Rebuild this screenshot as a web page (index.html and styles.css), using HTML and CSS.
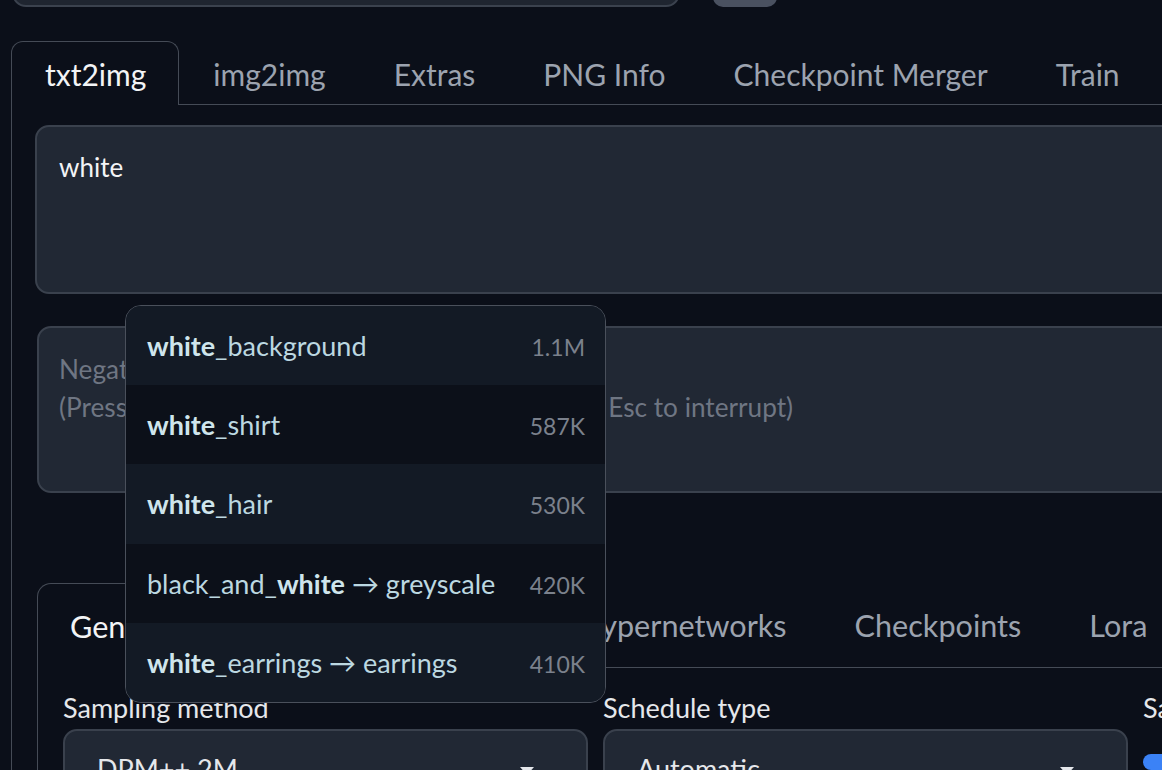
FILE: index.html
```html
<!DOCTYPE html>
<html>
<head>
<meta charset="utf-8">
<link rel="stylesheet" href="styles.css">
</head>
<body>
<div class="app">
  <div class="topbar">
    <div class="top-input"></div>
    <div class="top-btn"></div>
  </div>

  <div class="tabs">
    <div class="tabnav">
      <div class="tab active">txt2img</div>
      <div class="tab">img2img</div>
      <div class="tab">Extras</div>
      <div class="tab">PNG Info</div>
      <div class="tab">Checkpoint Merger</div>
      <div class="tab">Train</div>
      <div class="tab">Settings</div>
      <div class="tab">Extensions</div>
    </div>
    <div class="tabpanel">
      <div class="prompt">white</div>
      <div class="neg"><span class="ph">Negative prompt<br>(Press Ctrl+Enter to generate, Alt+Enter to skip, Esc to interrupt)</span></div>

      <div class="subtabs">
        <div class="subnav">
          <div class="stab active">Generation</div>
          <div class="stab">Textual Inversion</div>
          <div class="stab">Hypernetworks</div>
          <div class="stab">Checkpoints</div>
          <div class="stab">Lora</div>
        </div>
        <div class="subpanel">
          <div class="field">
            <div class="label">Sampling method</div>
            <div class="dropdown"><span>DPM++ 2M</span><i class="caret"></i></div>
          </div>
          <div class="field">
            <div class="label">Schedule type</div>
            <div class="dropdown"><span>Automatic</span><i class="caret"></i></div>
          </div>
          <div class="field">
            <div class="label">Sampling steps</div>
            <div class="slider"></div>
          </div>
        </div>
      </div>
    </div>
  </div>

  <div class="popup">
    <div class="row"><span class="name"><b>white</b>_background</span><span class="count">1.1M</span></div>
    <div class="row alt"><span class="name"><b>white</b>_shirt</span><span class="count">587K</span></div>
    <div class="row"><span class="name"><b>white</b>_hair</span><span class="count">530K</span></div>
    <div class="row alt"><span class="name">black_and_<b>white</b> → greyscale</span><span class="count">420K</span></div>
    <div class="row"><span class="name"><b>white</b>_earrings → earrings</span><span class="count">410K</span></div>
  </div>
</div>
</body>
</html>
```
FILE: styles.css
```css
html, body {
  margin: 0;
  padding: 0;
}
body {
  background: #0b0f19;
  font-family: Lato, "Noto Sans", sans-serif;
  width: 1162px;
  height: 770px;
  overflow: hidden;
}
.app {
  position: relative;
  display: flow-root;
  width: 1600px;
  height: 770px;
}

/* top bar (cut off) */
.topbar {
  display: flex;
  align-items: flex-end;
  height: 47px;
  margin-top: -40px;
}
.top-input {
  margin-left: 12px;
  width: 668px;
  height: 47px;
  box-sizing: border-box;
  background: #1f2530;
  border: 2px solid #3b424e;
  border-radius: 0 0 14px 14px;
}
.top-btn {
  margin-left: 33px;
  width: 64px;
  height: 47px;
  background: #4a5160;
  border-radius: 0 0 10px 10px;
}

/* main tabs */
.tabs {
  margin-top: 34px;
  margin-left: 11px;
}
.tabnav {
  display: flex;
  border-bottom: 1px solid #454b56;
  height: 63px;
}
.tab {
  padding: 0 34px;
  height: 63px;
  line-height: 66px;
  font-size: 30px;
  color: #9ca3af;
  white-space: nowrap;
}
.tab.active {
  color: #f3f4f6;
  border: 1px solid #454b56;
  border-bottom: none;
  border-radius: 12px 12px 0 0;
  background: #0b0f19;
  padding-left: 33px;
  padding-right: 32px;
  height: 63px;
  line-height: 64px;
}
.tabpanel {
  border-left: 1px solid #454b56;
  padding: 20px 0 0 23px;
  height: 700px;
}

.prompt {
  height: 169px;
  box-sizing: border-box;
  background: #212834;
  border: 2px solid #3a414d;
  border-radius: 14px;
  padding: 22px 22px;
  font-size: 26px;
  line-height: 36px;
  color: #f3f4f6;
}
.neg {
  margin-top: 32px;
  margin-left: 2px;
  height: 167px;
  box-sizing: border-box;
  background: #212834;
  border: 2px solid #3a414d;
  border-radius: 14px;
  padding: 22px 20px;
  font-size: 26.2px;
  line-height: 38px;
}
.ph {
  color: #6f7683;
}

/* sub tabs */
.subtabs {
  margin-top: 90px;
  margin-left: 2px;
}
.subnav {
  display: flex;
  border-bottom: 1px solid #454b56;
  height: 84px;
}
.stab {
  padding: 0 34px;
  height: 84px;
  line-height: 86px;
  font-size: 30.6px;
  color: #9ca3af;
  white-space: nowrap;
}
.stab.active {
  color: #f3f4f6;
  border: 1px solid #454b56;
  border-bottom: none;
  border-radius: 14px 14px 0 0;
  background: #0b0f19;
  padding-left: 32px;
  padding-right: 28px;
  height: 84px;
  margin-bottom: -1px;
}
.subpanel {
  border-left: 1px solid #454b56;
  padding: 22px 0 0 25px;
  display: grid;
  grid-template-columns: 525px 525px 400px;
  column-gap: 15px;
  height: 300px;
}
.label {
  font-size: 27px;
  line-height: 36px;
  color: #e5e7eb;
  white-space: nowrap;
}
.dropdown {
  position: relative;
  margin-top: 3px;
  height: 80px;
  box-sizing: border-box;
  background: #212834;
  border: 2px solid #3a414d;
  border-radius: 14px;
  padding: 20px 32px;
  font-size: 27px;
  line-height: 36px;
  color: #e5e7eb;
}
.caret {
  position: absolute;
  right: 52px;
  top: 36px;
  width: 0;
  height: 0;
  border-left: 7px solid transparent;
  border-right: 7px solid transparent;
  border-top: 8px solid #e5e7eb;
}
.slider {
  margin-top: 28px;
  height: 16px;
  width: 300px;
  border-radius: 8px;
  background: #3b82f6;
}

/* autocomplete popup */
.popup {
  position: absolute;
  left: 125px;
  top: 305px;
  width: 481px;
  box-sizing: border-box;
  border: 1px solid #4a505b;
  border-radius: 16px;
  background: #131a25;
  overflow: hidden;
  z-index: 10;
}
.row {
  display: flex;
  align-items: baseline;
  justify-content: space-between;
  height: 79.2px;
  box-sizing: border-box;
  padding: 23px 20px 0 21px;
  background: #131a25;
}
.row.alt {
  background: #0c1019;
}
.name {
  font-size: 27px;
  color: #bcd8e1;
  white-space: nowrap;
}
.name b {
  font-weight: 700;
  color: #cfe5ec;
}
.count {
  font-size: 23px;
  color: #7b818c;
}
```
